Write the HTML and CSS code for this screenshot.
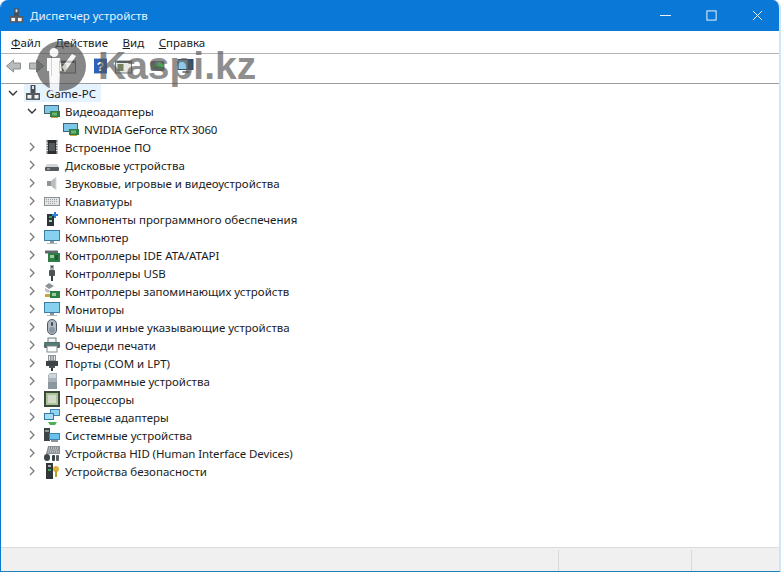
FILE: index.html
```html
<!DOCTYPE html>
<html lang="ru">
<head>
<meta charset="utf-8">
<title>Диспетчер устройств</title>
<link rel="stylesheet" href="styles.css">
</head>
<body>
<svg class="defs" width="0" height="0">
  <defs>
    <symbol id="pc" viewBox="0 0 16 16"><rect x="5.500" y="0" width="5" height="8" fill="#4a4f55"/><rect x="7" y="1" width="2" height="3" fill="#dfe3e6"/><rect x="1" y="8" width="14" height="7" fill="#555a60"/><rect x="2.500" y="10" width="4" height="3.500" fill="#f2f4f5"/><rect x="9.500" y="10" width="4" height="3.500" fill="#f2f4f5"/></symbol>
    <symbol id="display" viewBox="0 0 16 16"><rect x="0" y="2" width="15" height="9" fill="#45606e"/><rect x="1" y="3" width="13" height="7" fill="#7cc7ea"/><rect x="6" y="8" width="10" height="6" fill="#2f7d47"/><rect x="8" y="9.500" width="5" height="3" fill="#6fb56d"/><rect x="7" y="14" width="7" height="1" fill="#c9a53f"/></symbol>
    <symbol id="chip" viewBox="0 0 16 16"><path d="M2 1h12v14H2z" fill="#b6b9bb"/><rect x="3.500" y="1" width="9" height="14" fill="#2c2f31"/><path d="M2 4h2M2 6.500h2M2 9h2M2 11.500h2M12 4h2M12 6.500h2M12 9h2M12 11.500h2" stroke="#e6e6e6"/><rect x="5" y="4" width="6" height="8" fill="#55595c"/></symbol>
    <symbol id="disk" viewBox="0 0 16 16"><path d="M3 7h10l2 3H1z" fill="#d3d6d8"/><rect x="1" y="10" width="14" height="4" rx="1" fill="#55595c"/><rect x="3" y="11.500" width="3" height="1" fill="#c8ccce"/></symbol>
    <symbol id="speaker" viewBox="0 0 16 16"><rect x="3" y="6" width="4" height="5" fill="#8f9497"/><path d="M7 6l5-4v13l-5-4z" fill="#b9bdbf"/><path d="M12 2v13" stroke="#dcdfe0"/></symbol>
    <symbol id="keyboard" viewBox="0 0 16 16"><rect x="0" y="4" width="16" height="9" fill="#8b9094"/><rect x="1" y="5" width="14" height="7" fill="#e2e4e6"/><path d="M2 6.500h12M2 8.500h12M4 10.500h8" stroke="#9aa0a4" stroke-dasharray="1 1"/></symbol>
    <symbol id="comp" viewBox="0 0 16 16"><rect x="3" y="3" width="7" height="12" fill="#2d3336"/><rect x="5" y="5" width="3" height="2" fill="#3fa45b"/><rect x="5" y="9" width="3" height="2" fill="#9fd3a8"/><path d="M10 1h2v2h2v2h-2v2h-2V5H8V3h2z" fill="#2e7fd6"/></symbol>
    <symbol id="monitor" viewBox="0 0 16 16"><rect x="0" y="1" width="16" height="11" fill="#3d7ea6"/><rect x="1" y="2" width="14" height="9" fill="#86d0f0"/><rect x="6" y="12" width="4" height="2" fill="#8c9296"/><rect x="3" y="14" width="10" height="1" fill="#b5babd"/></symbol>
    <symbol id="ide" viewBox="0 0 16 16"><path d="M1 3h13v4H1z" fill="#b4b9bc"/><rect x="1" y="4" width="13" height="2" fill="#60686c"/><rect x="4" y="6" width="12" height="9" fill="#2f7d47"/><rect x="6" y="8" width="4" height="3" fill="#9ecb9b"/><rect x="11" y="8" width="3" height="5" fill="#1e5a33"/></symbol>
    <symbol id="usb" viewBox="0 0 16 16"><rect x="6" y="0" width="4" height="5" fill="#a8adb0"/><rect x="7" y="1" width="2" height="1.500" fill="#43484b"/><rect x="5" y="5" width="6" height="6" rx="1" fill="#4d5356"/><rect x="7" y="11" width="2" height="5" fill="#3a3f42"/></symbol>
    <symbol id="storage" viewBox="0 0 16 16"><path d="M5 0l5 3-5 3-4-3z" fill="#8d9296"/><path d="M1 5l6 3-3 2-3-2z" fill="#bcc0c3"/><rect x="6" y="8" width="10" height="7" fill="#2f7d47"/><rect x="8" y="10" width="4" height="3" fill="#9ecb9b"/><rect x="1" y="11" width="5" height="3" fill="#c9a53f"/></symbol>
    <symbol id="mouse" viewBox="0 0 16 16"><rect x="3.500" y="0.500" width="9" height="15" rx="4.500" fill="#b2b9c2" stroke="#4e5a66"/><rect x="7" y="3" width="2" height="4" rx="1" fill="#3f4c5a"/><rect x="5" y="8" width="6" height="6" rx="3" fill="#8895a3"/></symbol>
    <symbol id="printer" viewBox="0 0 16 16"><rect x="4" y="1" width="8" height="5" fill="#f2f4f5" stroke="#777d80"/><rect x="0" y="5" width="16" height="6" rx="1" fill="#59646a"/><path d="M0 7h16" stroke="#3fa07f"/><rect x="3" y="9" width="10" height="6" fill="#fff" stroke="#868c90"/></symbol>
    <symbol id="port" viewBox="0 0 16 16"><rect x="4" y="0" width="8" height="6" fill="#8e9396"/><path d="M5.500 1v4M8 1v4M10.500 1v4" stroke="#e7e7e7"/><rect x="2" y="6" width="12" height="5" fill="#3e4346"/><rect x="5" y="11" width="6" height="2" fill="#4d5356"/><rect x="7" y="13" width="2" height="3" fill="#2f3336"/></symbol>
    <symbol id="soft" viewBox="0 0 16 16"><path d="M4 2l2-2h7v16H4z" fill="#a9b3b9"/><rect x="5" y="1" width="7" height="4" fill="#cfd6da"/><rect x="4" y="9" width="9" height="7" fill="#8b979e"/></symbol>
    <symbol id="cpu" viewBox="0 0 16 16"><rect x="0" y="0" width="16" height="16" fill="#3b4a3d"/><rect x="2" y="2" width="12" height="12" fill="#a9c59a"/><rect x="4" y="4" width="8" height="8" fill="#d4d8c8"/></symbol>
    <symbol id="net" viewBox="0 0 16 16"><rect x="6" y="0" width="10" height="7" fill="#3b84b4"/><rect x="7" y="1" width="8" height="5" fill="#93d2f0"/><rect x="0" y="4" width="10" height="7" fill="#2f79ad"/><rect x="1" y="5" width="8" height="5" fill="#a5dcf4"/><path d="M4 13h9l-2 3H6z" fill="#4caf50"/></symbol>
    <symbol id="sys" viewBox="0 0 16 16"><rect x="0" y="1" width="6" height="13" fill="#3d4447"/><rect x="1" y="3" width="4" height="2" fill="#8f979b"/><rect x="5" y="6" width="11" height="7" fill="#3b84b4"/><rect x="6" y="7" width="9" height="5" fill="#6cc1ea"/><rect x="7" y="13" width="7" height="2" fill="#8c9296"/></symbol>
    <symbol id="hid" viewBox="0 0 16 16"><path d="M4 1h12v8H2z" fill="#8b9094"/><path d="M5 3h9M4.500 5h10M4 7h11" stroke="#e4e6e8" stroke-dasharray="1 1"/><rect x="0" y="9" width="6" height="7" rx="3" fill="#40474b"/><rect x="8" y="10" width="3" height="6" rx="1" fill="#3a4145"/><rect x="12" y="10" width="3" height="6" rx="1" fill="#5a6267"/></symbol>
    <symbol id="security" viewBox="0 0 16 16"><rect x="2" y="0" width="7" height="16" fill="#30363a"/><rect x="4" y="2" width="3" height="2" fill="#a8b0b4"/><rect x="4" y="6" width="3" height="2" fill="#3fa45b"/><circle cx="12" cy="6" r="3" fill="#d9b13b"/><rect x="11" y="8" width="2" height="6" fill="#c39a2b"/></symbol>
    <symbol id="chev-r" viewBox="0 0 10 10"><path d="M3 1l4 4-4 4" fill="none" stroke="#7a7a7a" stroke-width="1.300"/></symbol>
    <symbol id="chev-d" viewBox="0 0 10 10"><path d="M1 3l4 4 4-4" fill="none" stroke="#333" stroke-width="1.400"/></symbol>
  </defs>
</svg>

<div class="window">
  <header class="titlebar">
    <svg class="title-icon"><use href="#pc"/></svg>
    <span class="title-text">Диспетчер устройств</span>
    <div class="controls">
      <svg class="ctl" viewBox="0 0 12 12"><path d="M0 6h12" stroke="#fff"/></svg>
      <svg class="ctl" viewBox="0 0 12 12"><rect x="1" y="1" width="10" height="10" fill="none" stroke="#fff"/></svg>
      <svg class="ctl" viewBox="0 0 12 12"><path d="M1 1l10 10M11 1L1 11" stroke="#fff"/></svg>
    </div>
  </header>

  <nav class="menubar">
    <span class="menu"><u>Ф</u>айл</span>
    <span class="menu"><u>Д</u>ействие</span>
    <span class="menu"><u>В</u>ид</span>
    <span class="menu"><u>С</u>правка</span>
  </nav>

  <div class="toolbar">
    <svg class="tool" viewBox="0 0 16 16"><path d="M1 8l7-6v3h7v6H8v3z" fill="#b9bcbc" stroke="#8a8d8d"/></svg>
    <svg class="tool" viewBox="0 0 16 16"><path d="M15 8L8 2v3H1v6h7v3z" fill="#b9bcbc" stroke="#8a8d8d"/></svg>
    <span class="tool-sep"></span>
    <svg class="tool after-sep" viewBox="0 0 16 16"><rect x="0" y="3" width="16" height="12" fill="#e8e8e4" stroke="#777"/><rect x="1" y="3" width="14" height="2" fill="#55605c"/><rect x="2" y="6" width="5" height="7" fill="#7d8a6c"/></svg>
    <svg class="tool help" viewBox="1 0 14 16"><rect x="1" y="0" width="14" height="16" fill="#2e62b8"/><text class="help-mark" x="8" y="13">?</text></svg>
    <svg class="tool" viewBox="0 0 16 16"><rect x="0" y="3" width="16" height="12" fill="#e8e8e4" stroke="#777"/><rect x="1" y="3" width="14" height="2" fill="#55605c"/><rect x="2" y="6" width="6" height="7" fill="#77805f"/></svg>
    <svg class="tool scan" viewBox="0 0 16 16"><rect x="1" y="3" width="14" height="10" rx="2" fill="#6b7375"/><path d="M2 8h12M9 5l4 3-4 3" fill="none" stroke="#3fb04a" stroke-width="2"/></svg>
    <svg class="tool last" viewBox="0 0 16 16"><rect x="0" y="1" width="16" height="11" fill="#2b4f70"/><rect x="1" y="2" width="9" height="9" fill="#8fc8e8"/><rect x="5" y="13" width="7" height="2" fill="#7c8488"/></svg>
  </div>

  <main class="tree">
    <div class="row root">
      <svg class="chev"><use href="#chev-d"/></svg>
      <div class="selected"><svg class="ico"><use href="#pc"/></svg><span>Game-PC</span></div>
    </div>
    <div class="row l1"><svg class="chev"><use href="#chev-d"/></svg><svg class="ico"><use href="#display"/></svg><span>Видеоадаптеры</span></div>
    <div class="row l2"><svg class="ico"><use href="#display"/></svg><span class="tight-latin">NVIDIA GeForce RTX 3060</span></div>
    <div class="row l1"><svg class="chev"><use href="#chev-r"/></svg><svg class="ico"><use href="#chip"/></svg><span>Встроенное ПО</span></div>
    <div class="row l1"><svg class="chev"><use href="#chev-r"/></svg><svg class="ico"><use href="#disk"/></svg><span>Дисковые устройства</span></div>
    <div class="row l1"><svg class="chev"><use href="#chev-r"/></svg><svg class="ico"><use href="#speaker"/></svg><span>Звуковые, игровые и видеоустройства</span></div>
    <div class="row l1"><svg class="chev"><use href="#chev-r"/></svg><svg class="ico"><use href="#keyboard"/></svg><span>Клавиатуры</span></div>
    <div class="row l1"><svg class="chev"><use href="#chev-r"/></svg><svg class="ico"><use href="#comp"/></svg><span>Компоненты программного обеспечения</span></div>
    <div class="row l1"><svg class="chev"><use href="#chev-r"/></svg><svg class="ico"><use href="#monitor"/></svg><span>Компьютер</span></div>
    <div class="row l1"><svg class="chev"><use href="#chev-r"/></svg><svg class="ico"><use href="#ide"/></svg><span>Контроллеры IDE ATA/ATAPI</span></div>
    <div class="row l1"><svg class="chev"><use href="#chev-r"/></svg><svg class="ico"><use href="#usb"/></svg><span>Контроллеры USB</span></div>
    <div class="row l1"><svg class="chev"><use href="#chev-r"/></svg><svg class="ico"><use href="#storage"/></svg><span>Контроллеры запоминающих устройств</span></div>
    <div class="row l1"><svg class="chev"><use href="#chev-r"/></svg><svg class="ico"><use href="#monitor"/></svg><span>Мониторы</span></div>
    <div class="row l1"><svg class="chev"><use href="#chev-r"/></svg><svg class="ico"><use href="#mouse"/></svg><span>Мыши и иные указывающие устройства</span></div>
    <div class="row l1"><svg class="chev"><use href="#chev-r"/></svg><svg class="ico"><use href="#printer"/></svg><span>Очереди печати</span></div>
    <div class="row l1"><svg class="chev"><use href="#chev-r"/></svg><svg class="ico"><use href="#port"/></svg><span>Порты (COM и LPT)</span></div>
    <div class="row l1"><svg class="chev"><use href="#chev-r"/></svg><svg class="ico"><use href="#soft"/></svg><span>Программные устройства</span></div>
    <div class="row l1"><svg class="chev"><use href="#chev-r"/></svg><svg class="ico"><use href="#cpu"/></svg><span>Процессоры</span></div>
    <div class="row l1"><svg class="chev"><use href="#chev-r"/></svg><svg class="ico"><use href="#net"/></svg><span>Сетевые адаптеры</span></div>
    <div class="row l1"><svg class="chev"><use href="#chev-r"/></svg><svg class="ico"><use href="#sys"/></svg><span>Системные устройства</span></div>
    <div class="row l1"><svg class="chev"><use href="#chev-r"/></svg><svg class="ico"><use href="#hid"/></svg><span class="tight-mixed">Устройства HID (Human Interface Devices)</span></div>
    <div class="row l1"><svg class="chev"><use href="#chev-r"/></svg><svg class="ico"><use href="#security"/></svg><span>Устройства безопасности</span></div>
  </main>

  <footer class="statusbar">
    <div class="pane grow"></div>
    <div class="pane mid"></div>
    <div class="pane end"></div>
  </footer>

  <div class="watermark">
    <svg class="wm-logo" viewBox="0 0 50 50"><circle cx="25" cy="25" r="25" fill="#4a4a4a"/><path d="M18 7a4.500 4.500 0 1 1 0 9 4.500 4.500 0 0 1 0-9zM11 17h13l2 13-2 0-1 20H14l-1-20-2 0z" fill="#f6f6f6"/><path d="M26 26l10-13 4 2-11 16z" fill="#f6f6f6"/></svg>
    <span class="wm-text">Kaspi.kz</span>
  </div>
</div>
</body>
</html>
```

FILE: styles.css
```css
* { box-sizing: border-box; }

html, body {
  margin: 0;
  height: 100%;
  overflow: hidden;
  background: #fff;
}

.defs { position: absolute; }

.window {
  position: relative;
  width: 781px;
  height: 572px;
  display: flex;
  flex-direction: column;
  background: #fff;
  border-left: 1px solid #0a78d7;
  border-right: 2px solid #cfe6f7;
  border-bottom: 1px solid #1d7fb8;
  border-top-right-radius: 8px;
  border-top-left-radius: 8px;
  overflow: hidden;
  font-family: "Noto Sans", sans-serif;
  font-size: 11.5px;
  color: #1c1c1c;
}

.titlebar {
  flex: 0 0 31px;
  margin-right: -2px;
  display: flex;
  align-items: center;
  background: #0a78d7;
  color: #fff;
  padding-left: 8px;
}

.title-icon { width: 15px; height: 16px; }

.title-text {
  margin-left: 6px;
  color: #e6f2fb;
}

.controls {
  margin-left: auto;
  display: flex;
  gap: 35px;
  padding-right: 18px;
}

.ctl { width: 11px; height: 11px; }

.menubar {
  flex: 0 0 23px;
  display: flex;
  align-items: center;
  gap: 14.5px;
  padding-left: 10px;
  border-bottom: 1px solid #b4b4b4;
}

.menu u { text-underline-offset: 1px; }

.toolbar {
  flex: 0 0 30px;
  display: flex;
  align-items: center;
  padding: 0 0 5px 4px;
  border-bottom: 1px solid #9c9c9c;
  gap: 6px;
}

.tool { width: 17px; height: 16px; flex: none; }

.after-sep { margin-left: 1px; }

.help { width: 13px; margin-left: 12px; margin-right: 2px; }

.scan { margin-left: 11px; }

.last { margin-left: 5px; }

.help-mark {
  font-family: "Liberation Sans", sans-serif;
  font-weight: 700;
  font-size: 13px;
  fill: #fff;
  text-anchor: middle;
}

.tool-sep {
  width: 1px;
  height: 20px;
  background: #8f8f8f;
}

.tree {
  flex: 1;
}

.row {
  height: 18px;
  display: flex;
  align-items: center;
}

.row span { white-space: nowrap; }

.tight-latin { letter-spacing: -0.26px; }

.tight-mixed { letter-spacing: -0.1px; }

.chev { width: 10px; height: 10px; flex: none; margin-right: 7px; }

.ico { width: 16px; height: 16px; flex: none; margin-right: 5px; }

.root { padding-left: 7px; }

.root .chev { margin-right: 6px; }

.selected {
  display: flex;
  align-items: center;
  height: 18px;
  width: 77px;
  padding-left: 1px;
  background: #e5f3ff;
}

.l1 { padding-left: 26px; }

.l2 { padding-left: 62px; }

.statusbar {
  flex: 0 0 24px;
  display: flex;
  background: #f0f0f0;
  border-top: 1px solid #dcdcdc;
}

.pane { border-right: 1px solid #d9d9d9; margin-top: 2px; }

.grow { width: 558px; }

.mid { width: 133px; }

.end { flex: 1; border-right: 0; }

.watermark {
  position: absolute;
  left: 35px;
  top: 41px;
  display: flex;
  align-items: center;
  gap: 12px;
  opacity: 0.66;
  pointer-events: none;
}

.wm-logo { width: 50px; height: 50px; }

.wm-text {
  font-family: "Liberation Sans", sans-serif;
  font-weight: 700;
  font-size: 39px;
  line-height: 44px;
  color: #555;
}
```
